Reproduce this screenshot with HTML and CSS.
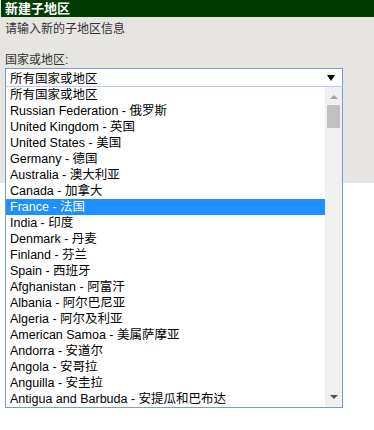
FILE: index.html
```html
<!DOCTYPE html>
<html lang="zh-CN">
<head>
    <meta charset="UTF-8">
    <title>新建子地区</title>
    <link rel="stylesheet" href="styles.css">
</head>
<body>
    <div class="panel">
        <div class="title">新建子地区</div>
        <div class="intro">请输入新的子地区信息</div>

        <div class="field">
            <div class="label">国家或地区:</div>
            <div class="select">
                <span class="select-text">所有国家或地区</span>
                <span class="caret"></span>

                <div class="dropdown">
                    <ul class="options">
                        <li>所有国家或地区</li>
                        <li>Russian Federation - 俄罗斯</li>
                        <li>United Kingdom - 英国</li>
                        <li>United States - 美国</li>
                        <li>Germany - 德国</li>
                        <li>Australia - 澳大利亚</li>
                        <li>Canada - 加拿大</li>
                        <li class="selected">France - 法国</li>
                        <li>India - 印度</li>
                        <li>Denmark - 丹麦</li>
                        <li>Finland - 芬兰</li>
                        <li>Spain - 西班牙</li>
                        <li>Afghanistan - 阿富汗</li>
                        <li>Albania - 阿尔巴尼亚</li>
                        <li>Algeria - 阿尔及利亚</li>
                        <li>American Samoa - 美属萨摩亚</li>
                        <li>Andorra - 安道尔</li>
                        <li>Angola - 安哥拉</li>
                        <li>Anguilla - 安圭拉</li>
                        <li>Antigua and Barbuda - 安提瓜和巴布达</li>
                    </ul>
                    <div class="scrollbar">
                        <span class="arrow-up"></span>
                        <span class="thumb"></span>
                        <span class="arrow-down"></span>
                    </div>
                </div>
            </div>
        </div>
    </div>
</body>
</html>
```
FILE: styles.css
```css
body {
    margin: 0;
    min-height: 430px;
    background: #fff;
    font-family: "Liberation Sans", "Noto Sans CJK SC", sans-serif;
    font-size: 12px;
}

.panel {
    background: #e6e5e1;
    height: 183px;
    padding-left: 1px;
}

.title {
    background: #003c00;
    color: #fff;
    font-weight: bold;
    font-size: 13px;
    height: 17px;
    line-height: 17px;
    padding-left: 4px;
}

.intro {
    color: #333;
    line-height: 16px;
    padding: 4px 4px 0;
}

.field {
    padding: 0 4px;
    margin-top: 16px;
}
.label {
    color: #333;
    line-height: 15px;
}

.select {
    position: relative;
    height: 17px;
    border: 1px solid #7a9bd2;
    background: #fff;
    display: flex;
    align-items: center;
    justify-content: space-between;
    padding: 0 7px 0 0;
    width: 329px;
}
.select-text {
    padding-left: 4px;
    font-size: 12.5px;
    color: #000;
}
.caret {
    width: 0;
    height: 0;
    border-left: 4px solid transparent;
    border-right: 4px solid transparent;
    border-top: 6px solid #000;
}

.dropdown {
    position: absolute;
    top: 100%;
    left: -1px;
    width: 336px;
    border: 1px solid #7a9bd2;
    border-top: 1px solid #b9cbe8;
    background: #fff;
    display: flex;
    z-index: 10;
}
.options {
    list-style: none;
    margin: 0;
    padding: 0;
    flex: 1;
}
.options li {
    height: 16px;
    line-height: 17px;
    padding-left: 4px;
    font-size: 12.5px;
    color: #000;
    white-space: nowrap;
    overflow: hidden;
}
.options li.selected {
    background: #1e90ff;
    color: #fff;
}

.scrollbar {
    width: 17px;
    background: #f0f0f0;
    display: flex;
    flex-direction: column;
    align-items: center;
}
.arrow-up {
    margin-top: 8px;
    width: 0;
    height: 0;
    border-left: 4px solid transparent;
    border-right: 4px solid transparent;
    border-bottom: 4px solid #a3a3a3;
}
.thumb {
    margin-top: 6px;
    width: 13px;
    height: 23px;
    background: #c1c1c1;
}
.arrow-down {
    margin-top: auto;
    margin-bottom: 8px;
    width: 0;
    height: 0;
    border-left: 4px solid transparent;
    border-right: 4px solid transparent;
    border-top: 4px solid #505050;
}
```
